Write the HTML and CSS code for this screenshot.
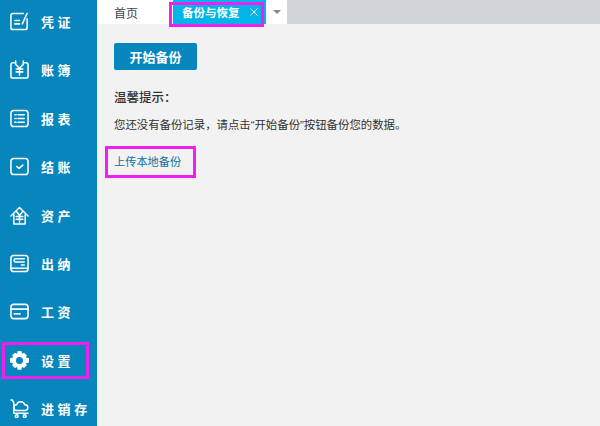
FILE: index.html
```html
<!DOCTYPE html>
<html lang="zh">
<head>
<meta charset="utf-8">
<title>备份与恢复</title>
<link rel="stylesheet" href="styles.css">
</head>
<body>
<div class="app">
  <nav class="sidebar">
    <div class="item"><svg class="icon" viewBox="0 0 20 20"><path d="M18 7v9.500a2 2 0 0 1-2 2H3a2 2 0 0 1-2-2V3.500a2 2 0 0 1 2-2h11"/><path d="M5 9h5M5 12.500h5M13 12.500l5-11"/></svg><span class="label">凭 证</span></div>
    <div class="item"><svg class="icon" viewBox="0 0 20 20"><path d="M5 3H3a2 2 0 0 0-2 2v12a2 2 0 0 0 2 2h14a2 2 0 0 0 2-2V5a2 2 0 0 0-2-2h-2"/><path d="M6 1v4M14 1v4M7 5.500l3 3.500 3-3.500M6.500 9.500h7M6.500 12.500h7M10 9v7"/></svg><span class="label">账 簿</span></div>
    <div class="item"><svg class="icon" viewBox="0 0 20 20"><rect x="1" y="1.500" width="18" height="17" rx="3"/><path d="M5 6h1.500M8.500 6h6.500M5 10h1.500M8.500 10h6.500M5 14h1.500M8.500 14h6.500"/></svg><span class="label">报 表</span></div>
    <div class="item"><svg class="icon" viewBox="0 0 20 20"><rect x="1" y="1.500" width="18" height="17" rx="3"/><path d="M7 10l2.500 2 4-3.500"/></svg><span class="label">结 账</span></div>
    <div class="item"><svg class="icon" viewBox="0 0 20 20"><path d="M1 10.500L10 1.500l9 9M4 9v10h12V9"/><path d="M7 6l3 4 3-4M6.500 11h7M6.500 14h7M10 10v7"/></svg><span class="label">资 产</span></div>
    <div class="item"><svg class="icon" viewBox="0 0 20 20"><rect x="1" y="1.500" width="18" height="17" rx="3"/><path d="M15 5H6a1.700 1.700 0 0 0 0 3.500h9"/><path d="M1 15h18M12 11.500h3"/></svg><span class="label">出 纳</span></div>
    <div class="item"><svg class="icon" viewBox="0 0 20 20"><rect x="1" y="2.500" width="18" height="15" rx="3"/><path d="M1 7.500h18M4.500 12.500h1M7 12.500h1M9.500 12.500h1"/></svg><span class="label">工 资</span></div>
    <div class="item active"><svg class="icon gear-icon" viewBox="0 0 20 20"><path class="gear" d="M8 0h4l.6 2.800 2.300-1 2.900 2.800-1.100 2.200 3.300.8v4.400l-3.300.8 1.100 2.200-2.900 2.800-2.300-1-.6 2.900H8l-.6-2.900-2.300 1-2.900-2.800 1.100-2.200-3.300-.8V7.600l3.300-.8-1.100-2.200 2.900-2.800 2.300 1zM10 6.300a3.700 3.700 0 1 0 0 7.400 3.700 3.700 0 0 0 0-7.400z"/></svg><span class="label">设 置</span></div>
    <div class="item"><svg class="icon" viewBox="0 0 20 20"><path d="M1 1h1.500l1.500 3v11h15"/><path d="M7 12a3 3 0 0 1 0-6 4.500 4.500 0 0 1 8.500 0 3 3 0 0 1 .5 6z"/><circle cx="7" cy="18" r="1.500"/><circle cx="15.500" cy="18" r="1.500"/></svg><span class="label">进 销 存</span></div>
  </nav>
  <main class="main">
    <div class="tabs">
      <div class="tab">首页</div>
      <div class="tab current"><span class="tab-name">备份与恢复</span><svg class="close" viewBox="0 0 8 8"><path d="M.500.500l7 7M7.500.500l-7 7"/></svg></div>
      <div class="more"><span class="caret"></span></div>
    </div>
    <section class="content">
      <button class="start">开始备份</button>
      <h2 class="tip-title">温馨提示：</h2>
      <p class="tip">您还没有备份记录，请点击“开始备份”按钮备份您的数据。</p>
      <a class="upload">上传本地备份</a>
    </section>
  </main>
</div>
</body>
</html>
```

FILE: styles.css
```css
* { box-sizing: border-box; }
html, body { margin: 0; height: 100%; overflow: hidden; }
body { font-family: "Liberation Sans", "Noto Sans CJK SC", sans-serif; }
.app { display: flex; width: 600px; height: 426px; background: #f2f2f2; }
.sidebar { width: 97px; height: 426px; flex: none; background: #0686bd; display: flex; flex-direction: column; padding: 3px 0 0 2px; overflow: hidden; }
.item { width: 87px; height: 37px; flex: none; display: flex; align-items: center; padding-left: 5px; margin-bottom: 11.400px; color: #fff; border: 3px solid transparent; }
.item.active { border-color: #f01ff0; }
.icon { width: 19px; height: 19px; flex: none; fill: none; stroke: #fff; stroke-width: 1.600; stroke-linecap: round; stroke-linejoin: round; }
.gear { fill: #fff; stroke: none; fill-rule: evenodd; }
.label { margin-left: 12px; font-size: 13px; font-weight: 700; white-space: nowrap; }
.main { flex: 1; display: flex; flex-direction: column; min-width: 0; }
.tabs { height: 24px; flex: none; background: #cfd5d9; display: flex; align-items: stretch; }
.tab { display: flex; align-items: center; font-size: 12px; color: #444; background: #fff; width: 76px; padding-left: 17px; }
.tab.current { position: relative; width: 93px; padding-left: 9px; background: #00b4e8; color: #fff; font-weight: 700; }
.tab.current::after { content: ""; position: absolute; left: -4px; right: 2px; top: 2px; bottom: -3px; border: 3px solid #f01ff0; }
.tab-name { font-size: 11.500px; white-space: nowrap; }
.close { width: 8px; height: 8px; margin-left: 10px; flex: none; stroke: #fff; stroke-width: 1; fill: none; }
.more { width: 21px; background: #fff; display: flex; align-items: center; justify-content: center; }
.caret { border: 4px solid transparent; border-top: 4px solid #888; border-bottom: 0; }
.content { flex: 1; padding: 19px 0 0 17px; display: flex; flex-direction: column; align-items: flex-start; }
.start { width: 83px; height: 27px; border: 0; border-radius: 2px; background: #0686bd; color: #fff; font: 700 13px "Liberation Sans", "Noto Sans CJK SC", sans-serif; padding: 0; }
.tip-title { margin: 20px 0 0; font-size: 12.500px; line-height: 16px; font-weight: 500; color: #333; }
.tip { margin: 11px 0 0; font-size: 11.400px; line-height: 16px; color: #333; }
.upload { margin: 13px 0 0 -9px; width: 91px; height: 32px; display: flex; align-items: center; padding: 0 0 3px 6px; border: 3px solid #f01ff0; font-size: 11.200px; color: #0f6f9f; }
```
